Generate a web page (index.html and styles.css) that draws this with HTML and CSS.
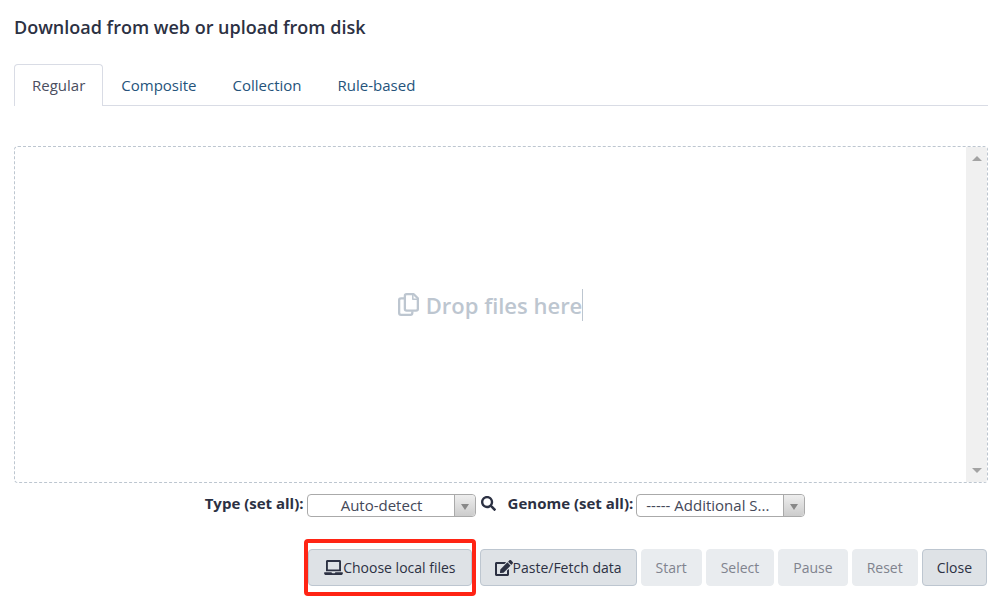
FILE: index.html
```html
<!DOCTYPE html>
<html lang="en">
<head>
<meta charset="utf-8">
<meta name="viewport" content="width=device-width, initial-scale=1">
<title>Download from web or upload from disk</title>
<link rel="stylesheet" href="styles.css">
</head>
<body>
<main class="upload">
  <h1 class="title">Download from web or upload from disk</h1>
  <nav class="tabs">
    <a class="tab active" href="#regular">Regular</a>
    <a class="tab" href="#composite">Composite</a>
    <a class="tab" href="#collection">Collection</a>
    <a class="tab" href="#rules">Rule-based</a>
  </nav>
  <section class="dropzone">
    <div class="drop-area">
      <div class="drop-hint">
        <svg class="copy-icon" viewBox="0 0 22 24" aria-hidden="true"><g fill="none" stroke="currentColor" stroke-width="2.4" stroke-linejoin="round"><path d="M6.500 5.500H3.200Q1.200 5.500 1.200 7.300V20.800Q1.200 22.800 3.200 22.800H13Q15 22.800 15 20.800V19"/><path d="M9 1.200H16.500L20.800 5.500V16.800Q20.800 18.500 19 18.500H9Q7.200 18.500 7.200 16.800V3Q7.200 1.200 9 1.200Z"/><path d="M15.500 1.500V6.500H20.500" stroke-width="1.600"/></g></svg>
        <span class="drop-text">Drop files here</span>
      </div>
    </div>
    <div class="scrollbar" aria-hidden="true">
      <span class="arrow-up"></span>
      <span class="arrow-down"></span>
    </div>
  </section>
  <div class="settings">
    <label class="label" for="type">Type (set all):</label>
    <span class="picker"><select id="type" class="select centered"><option>Auto-detect</option></select></span>
    <button class="search" type="button" aria-label="Search types"><svg viewBox="0 0 512 512"><path fill="currentColor" d="M505 442.700L405.300 343c-4.500-4.500-10.600-7-17-7H372c27.600-35.300 44-79.700 44-128C416 93.100 322.900 0 208 0S0 93.100 0 208s93.100 208 208 208c48.300 0 92.700-16.400 128-44v16.300c0 6.400 2.500 12.500 7 17l99.700 99.700c9.400 9.400 24.600 9.400 33.900 0l28.300-28.300c9.400-9.400 9.400-24.600.1-34zM208 336c-70.700 0-128-57.200-128-128 0-70.700 57.200-128 128-128 70.700 0 128 57.200 128 128 0 70.700-57.200 128-128 128z"/></svg></button>
    <label class="label" for="genome">Genome (set all):</label>
    <span class="picker"><select id="genome" class="select"><option>----- Additional S...</option></select></span>
  </div>
  <div class="actions">
    <span class="highlight"><button class="btn" type="button"><svg class="laptop-icon" viewBox="0 0 640 512" aria-hidden="true"><path fill="currentColor" d="M624 416H381.540c-.740 19.810-14.710 32-32.740 32H288c-18.690 0-33.020-17.470-32.770-32H16c-8.800 0-16 7.200-16 16v16c0 35.200 28.800 64 64 64h512c35.200 0 64-28.800 64-64v-16c0-8.800-7.200-16-16-16zM576 48c0-26.400-21.600-48-48-48H112C85.600 0 64 21.600 64 48v336h512V48zm-64 272H128V64h384v256z"/></svg>Choose local files</button></span>
    <button class="btn" type="button"><svg class="edit-icon" viewBox="0 0 576 512" aria-hidden="true"><path fill="currentColor" d="M402.600 83.200l90.200 90.200c3.800 3.800 3.800 10 0 13.800L274.400 405.600l-92.800 10.300c-12.400 1.400-22.900-9.100-21.500-21.500l10.300-92.800L388.800 83.200c3.800-3.800 10-3.800 13.800 0zm162-22.900l-48.800-48.800c-15.200-15.200-39.900-15.200-55.200 0l-35.400 35.400c-3.800 3.800-3.800 10 0 13.800l90.200 90.200c3.800 3.800 10 3.800 13.800 0l35.400-35.400c15.200-15.300 15.200-40 0-55.200zM384 346.200V448H64V128h229.800c3.200 0 6.200-1.300 8.500-3.500l40-40c7.600-7.600 2.200-20.500-8.500-20.500H48C21.500 64 0 85.500 0 112v352c0 26.500 21.500 48 48 48h352c26.500 0 48-21.500 48-48V306.200c0-10.700-12.900-16-20.500-8.500l-40 40c-2.200 2.300-3.500 5.300-3.500 8.500z"/></svg>Paste/Fetch data</button>
    <button class="btn" type="button" disabled>Start</button>
    <button class="btn" type="button" disabled>Select</button>
    <button class="btn" type="button" disabled>Pause</button>
    <button class="btn" type="button" disabled>Reset</button>
    <button class="btn" type="button">Close</button>
  </div>
</main>
</body>
</html>
```
FILE: styles.css
```css
* { box-sizing: border-box; }

body {
  margin: 0;
  background: #fff;
  color: #2c3143;
  font: 15px/20px "Open Sans", "Noto Sans", sans-serif;
}

.upload {
  display: flex;
  flex-direction: column;
  min-height: 100vh;
  padding: 14px 15px 4px 14px;
}

.title {
  margin: 0 0 24px;
  font-size: 18px;
  line-height: 26px;
  font-weight: 600;
}

.tabs {
  display: flex;
  border-bottom: 1px solid #d9dce5;
}

.tab {
  padding: 10px 17px;
  border: 1px solid transparent;
  border-bottom: 0;
  border-radius: 4px 4px 0 0;
  color: #25537b;
  text-decoration: none;
}

.tab.active {
  margin-bottom: -1px;
  padding-bottom: 11px;
  border-color: #d9dce5;
  background: #fff;
  color: #4a4e60;
}

.dropzone {
  display: flex;
  flex: 1;
  margin-top: 40px;
  border: 1px dashed #bdc6d0;
  border-radius: 4px;
  overflow: hidden;
}

.drop-area {
  display: flex;
  flex: 1;
  align-items: center;
  justify-content: center;
  padding-bottom: 20px;
}

.drop-hint {
  display: flex;
  align-items: center;
  gap: 7px;
  color: #bdc6d0;
  font-size: 22px;
  font-weight: 600;
  line-height: 32px;
}

.copy-icon { width: 21px; height: 23px; }

.drop-text { border-right: 1px solid #bdc6d0; }

.scrollbar {
  display: flex;
  flex-direction: column;
  justify-content: space-between;
  align-items: center;
  width: 21px;
  padding: 9px 0;
  background: #f0f0f0;
}

.arrow-up,
.arrow-down {
  border: 5px solid transparent;
}

.arrow-up { border-top: 0; border-bottom-color: #a3a3a3; }
.arrow-down { border-bottom: 0; border-top-color: #a3a3a3; }

.settings {
  display: flex;
  align-items: center;
  justify-content: center;
  margin: 10px 0 22px;
  padding-left: 8px;
}

.label {
  margin-right: 3px;
  padding-bottom: 4px;
  font-weight: 700;
}

.picker {
  position: relative;
  width: 169px;
}

.picker::before {
  content: "";
  position: absolute;
  inset: 1px 1px 1px auto;
  width: 20px;
  border-left: 1px solid #aaa;
  border-radius: 0 4px 4px 0;
  background: linear-gradient(#eee, #ccc);
  pointer-events: none;
}

.picker::after {
  content: "";
  position: absolute;
  top: 10px;
  right: 7px;
  border: 4px solid transparent;
  border-top: 6px solid #888;
  border-bottom: 0;
  pointer-events: none;
}

.select {
  display: block;
  width: 100%;
  height: 23px;
  padding: 0 20px 0 9px;
  appearance: none;
  border: 1px solid #aaa;
  border-radius: 4px;
  background: #fff;
  color: #444858;
  font: inherit;
}

.select.centered {
  padding-left: 1px;
  text-align: center;
}

.search {
  display: flex;
  margin: 0 12px 4px 5px;
  padding: 0;
  border: 0;
  background: none;
  color: #2c3143;
}

.search svg { width: 15px; height: 15px; }

.actions {
  display: flex;
  align-items: center;
  justify-content: flex-end;
  gap: 4px;
  padding-right: 1px;
}

.highlight {
  padding: 6px 0;
  border: 4px solid #ff2414;
  border-radius: 4px;
}

.btn {
  display: flex;
  align-items: center;
  height: 37px;
  padding: 0 14px;
  border: 1px solid #bdc6d0;
  border-radius: 4px;
  background: #dee2e6;
  color: #2c3143;
  font: inherit;
  font-size: 14px;
}

.highlight .btn {
  padding: 0 15px;
}

.btn:disabled {
  border-color: #e9ecef;
  background: #e9ecef;
  color: #80838e;
}

.laptop-icon { width: 19px; height: 15px; }
.edit-icon { width: 18px; height: 16px; }
```
